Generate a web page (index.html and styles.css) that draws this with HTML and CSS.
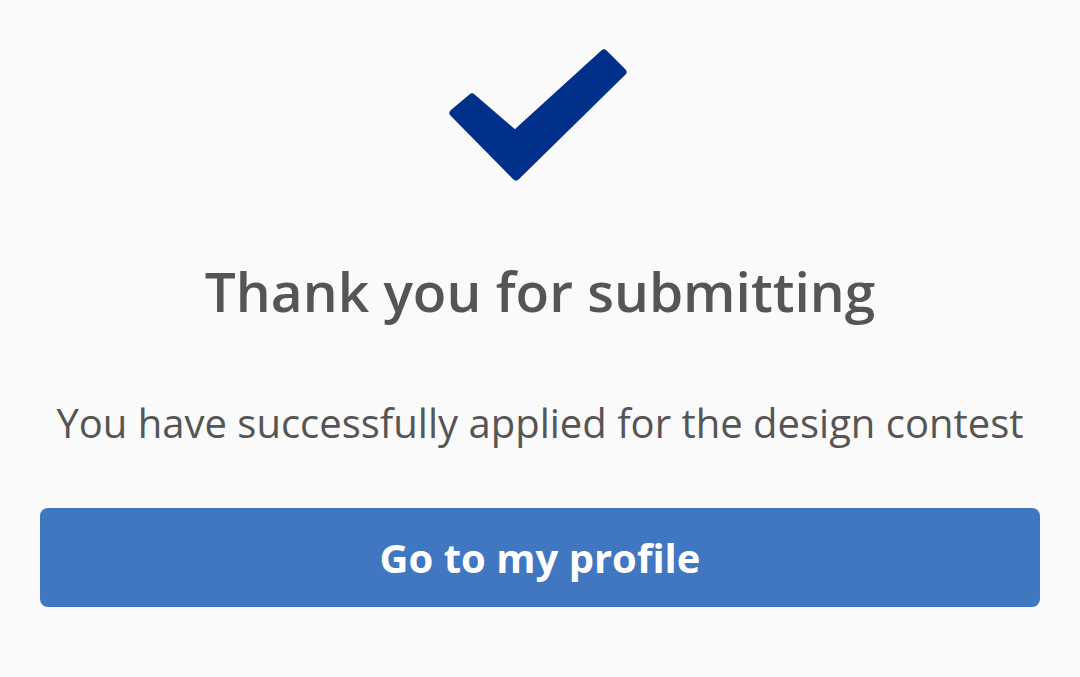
FILE: index.html
```html
<!DOCTYPE html>
<html lang="en">
<head>
    <meta charset="UTF-8" />
    <meta name="viewport" content="width=device-width, initial-scale=1.0" />
    <title>Submission complete</title>
    <link rel="stylesheet" href="styles.css">
</head>
<body>
    <div class="container">
        <svg class="check" viewBox="445 44 190 142" width="190" height="142" aria-hidden="true">
            <polygon points="472,97.5 515,134.5 604,53.5 622.5,72 516,176.5 453.5,113" />
        </svg>
        <h1>Thank you for submitting</h1>
        <p class="message">You have successfully applied for the design contest</p>
        <button class="profile-button">Go to my profile</button>
    </div>
</body>
</html>
```

FILE: styles.css
```css
* {
    margin: 0;
    padding: 0;
    box-sizing: border-box;
    font-family: 'Open Sans', sans-serif;
}

body {
    background: #fafafa;
    color: #555;
    min-height: 100vh;
}

.container {
    display: flex;
    flex-direction: column;
    align-items: center;
    padding: 44px 40px 0;
}

.check {
    display: block;
}

.check polygon {
    fill: #00308a;
    stroke: #00308a;
    stroke-width: 8;
    stroke-linejoin: round;
}

h1 {
    margin-top: 67px;
    font-size: 55px;
    font-weight: 600;
    line-height: 76px;
    color: #555;
}

.message {
    margin-top: 67px;
    font-size: 40px;
    line-height: 54px;
}

.profile-button {
    margin-top: 58px;
    width: 100%;
    height: 99px;
    background: #4177c1;
    border: none;
    border-radius: 8px;
    color: #fff;
    font-size: 40px;
    font-weight: 700;
    cursor: pointer;
}
```
